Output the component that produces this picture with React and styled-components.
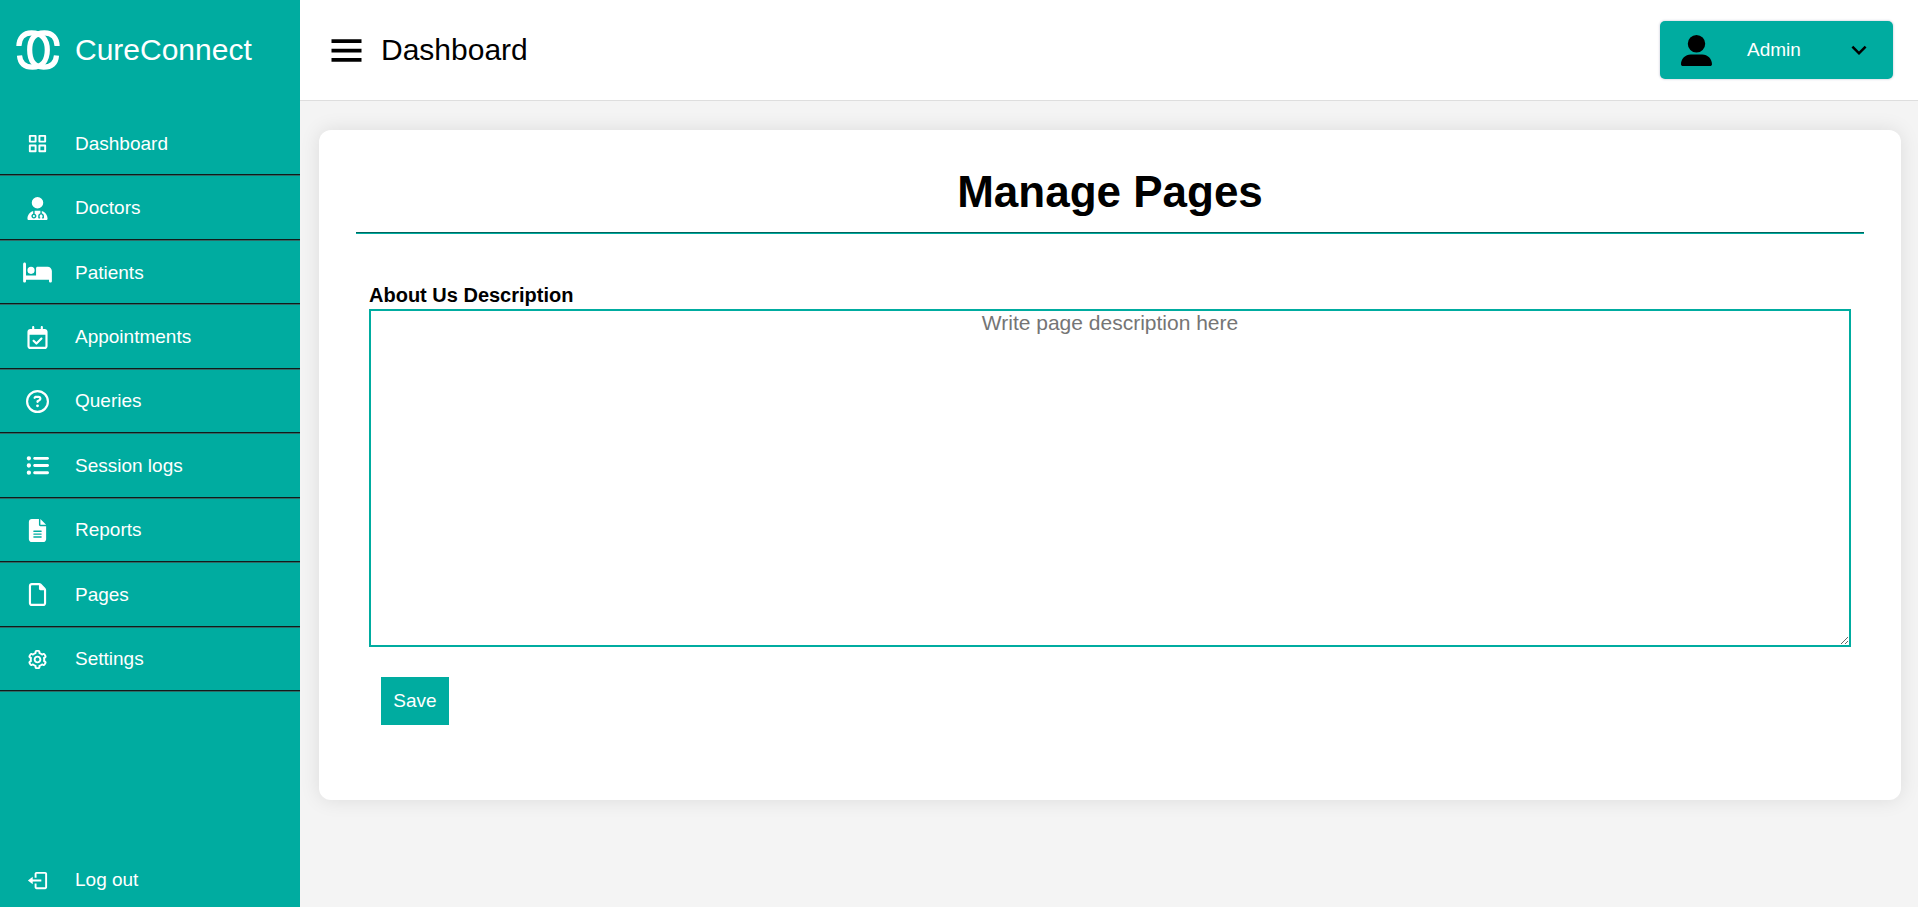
import React from 'react';
import styled, { createGlobalStyle } from 'styled-components';
import { BiGridAlt, BiCog, BiLogOut, BiMenu } from 'react-icons/bi';
import { MdExpandMore } from 'react-icons/md';
import {
  FaUserDoctor,
  FaBed,
  FaRegCalendarCheck,
  FaRegCircleQuestion,
  FaListUl,
  FaFileLines,
  FaRegFile,
  FaUserLarge,
} from 'react-icons/fa6';

const TEAL = '#00aca0';

const GlobalStyle = createGlobalStyle`
  *, *::before, *::after { box-sizing: border-box; }
  body {
    margin: 0;
    background: #f4f4f4;
    color: #000;
    font-family: Arial, "Liberation Sans", sans-serif;
  }
  button, textarea { font-family: inherit; }
`;

const Layout = styled.div`
  display: flex;
  min-height: 100vh;
`;

const Sidebar = styled.aside`
  display: flex;
  flex-direction: column;
  flex: 0 0 300px;
  background: ${TEAL};
  color: #fff;
`;

const Brand = styled.a`
  display: flex;
  align-items: center;
  height: 100px;
  margin-bottom: 12px;
  color: inherit;
  font-size: 30px;
  text-decoration: none;
`;

const IconCell = styled.span`
  display: flex;
  justify-content: center;
  align-items: center;
  flex: 0 0 75px;
`;

const NavIcon = styled(IconCell)`
  svg {
    width: 29px;
    height: 23px;
  }
`;

const NavList = styled.ul`
  display: grid;
  grid-auto-rows: 1fr;
  min-height: 580px;
  margin: 0;
  padding: 0;
  list-style: none;
`;

const NavItem = styled.li`
  display: flex;
  border-bottom: 1px solid #2e6b67;
  box-shadow: inset 0 -1px #101c1b;
`;

const NavLink = styled.a`
  display: flex;
  align-items: center;
  flex: 1;
  color: inherit;
  font-size: 19px;
  text-decoration: none;
`;

const LogoutLink = styled(NavLink)`
  flex: 0 0 54px;
  margin-top: auto;
`;

const Content = styled.div`
  display: flex;
  flex-direction: column;
  flex: 1;
  min-width: 0;
`;

const Header = styled.header`
  display: flex;
  justify-content: space-between;
  align-items: center;
  height: 101px;
  padding: 0 25px 0 24px;
  background: #fff;
  border-bottom: 1px solid #dedede;
`;

const HeaderLeft = styled.div`
  display: flex;
  align-items: center;
  gap: 12px;
  font-size: 30px;
`;

const MenuButton = styled.button`
  display: flex;
  padding: 0;
  border: 0;
  background: none;
  color: #000;
  cursor: pointer;
`;

const AccountButton = styled.button`
  display: flex;
  align-items: center;
  gap: 35px;
  width: 233px;
  height: 58px;
  padding: 0 19px 0 21px;
  border: 0;
  border-radius: 5px;
  background: ${TEAL};
  color: #000;
  font-size: 19px;
  box-shadow: 0 0 2px 1px #e2e2ea;
  cursor: pointer;
`;

const AccountName = styled.span`
  margin-right: auto;
  color: #fff;
`;

const Card = styled.main`
  margin: 29px 17px 29px 19px;
  padding: 37px;
  border-radius: 12px;
  background: #fff;
  box-shadow: 0 0 20px rgba(0, 0, 0, 0.1);
`;

const Title = styled.h1`
  margin: 0 0 15px;
  font-size: 44px;
  line-height: 50px;
  text-align: center;
`;

const Divider = styled.hr`
  margin: 0;
  border: 0;
  border-top: 1px solid #00655e;
  border-bottom: 1px solid ${TEAL};
`;

const Form = styled.form`
  display: flex;
  flex-direction: column;
  align-items: flex-start;
  padding: 50px 13px 38px;
`;

const Label = styled.label`
  margin-bottom: 2px;
  font-size: 20px;
  font-weight: bold;
  line-height: 23px;
`;

const Description = styled.textarea`
  width: 100%;
  height: 338px;
  margin: 0;
  padding: 0;
  border: 2px solid ${TEAL};
  border-radius: 0;
  font-size: 21px;
  text-align: center;
  outline: none;
  &::placeholder { color: #757575; }
`;

const SaveButton = styled.button`
  min-width: 68px;
  height: 48px;
  margin: 30px 12px 0;
  padding: 0 12px;
  border: 0;
  background: ${TEAL};
  color: #fff;
  font-size: 19px;
  cursor: pointer;
`;

const navItems = [
  ['Dashboard', BiGridAlt],
  ['Doctors', FaUserDoctor],
  ['Patients', FaBed],
  ['Appointments', FaRegCalendarCheck],
  ['Queries', FaRegCircleQuestion],
  ['Session logs', FaListUl],
  ['Reports', FaFileLines],
  ['Pages', FaRegFile],
  ['Settings', BiCog],
];

function Logo() {
  return (
    <svg width="45" height="40" viewBox="0 0 45 40" fill="none" stroke="#fff" aria-hidden="true">
      <g strokeWidth="5.2">
        <path d="M3.9 16C4.1 8 8.5 2.8 16.5 2.8C26.5 2.8 32.3 9 32.3 20C32.3 31 26.5 37.2 17.5 37.2C9.5 37.2 5.1 33 4.5 25.5" />
        <path d="M42.1 16C41.9 8 37.5 2.8 29.5 2.8C19.5 2.8 14.7 9 14.7 20C14.7 31 19.5 37.2 28.5 37.2C36.5 37.2 40.9 33 41.5 25.5" />
      </g>
    </svg>
  );
}

export default function App() {
  return (
    <Layout>
      <GlobalStyle />
      <Sidebar>
        <Brand href="#">
          <IconCell><Logo /></IconCell>
          CureConnect
        </Brand>
        <nav>
          <NavList>
            {navItems.map(([label, Icon]) => (
              <NavItem key={label}>
                <NavLink href="#">
                  <NavIcon><Icon /></NavIcon>
                  {label}
                </NavLink>
              </NavItem>
            ))}
          </NavList>
        </nav>
        <LogoutLink href="#">
          <NavIcon><BiLogOut /></NavIcon>
          Log out
        </LogoutLink>
      </Sidebar>
      <Content>
        <Header>
          <HeaderLeft>
            <MenuButton type="button" aria-label="Toggle menu"><BiMenu size={45} /></MenuButton>
            <span>Dashboard</span>
          </HeaderLeft>
          <AccountButton type="button">
            <FaUserLarge size={31} />
            <AccountName>Admin</AccountName>
            <MdExpandMore size={30} />
          </AccountButton>
        </Header>
        <Card>
          <Title>Manage Pages</Title>
          <Divider />
          <Form>
            <Label htmlFor="about">About Us Description</Label>
            <Description id="about" placeholder="Write page description here" />
            <SaveButton type="button">Save</SaveButton>
          </Form>
        </Card>
      </Content>
    </Layout>
  );
}
